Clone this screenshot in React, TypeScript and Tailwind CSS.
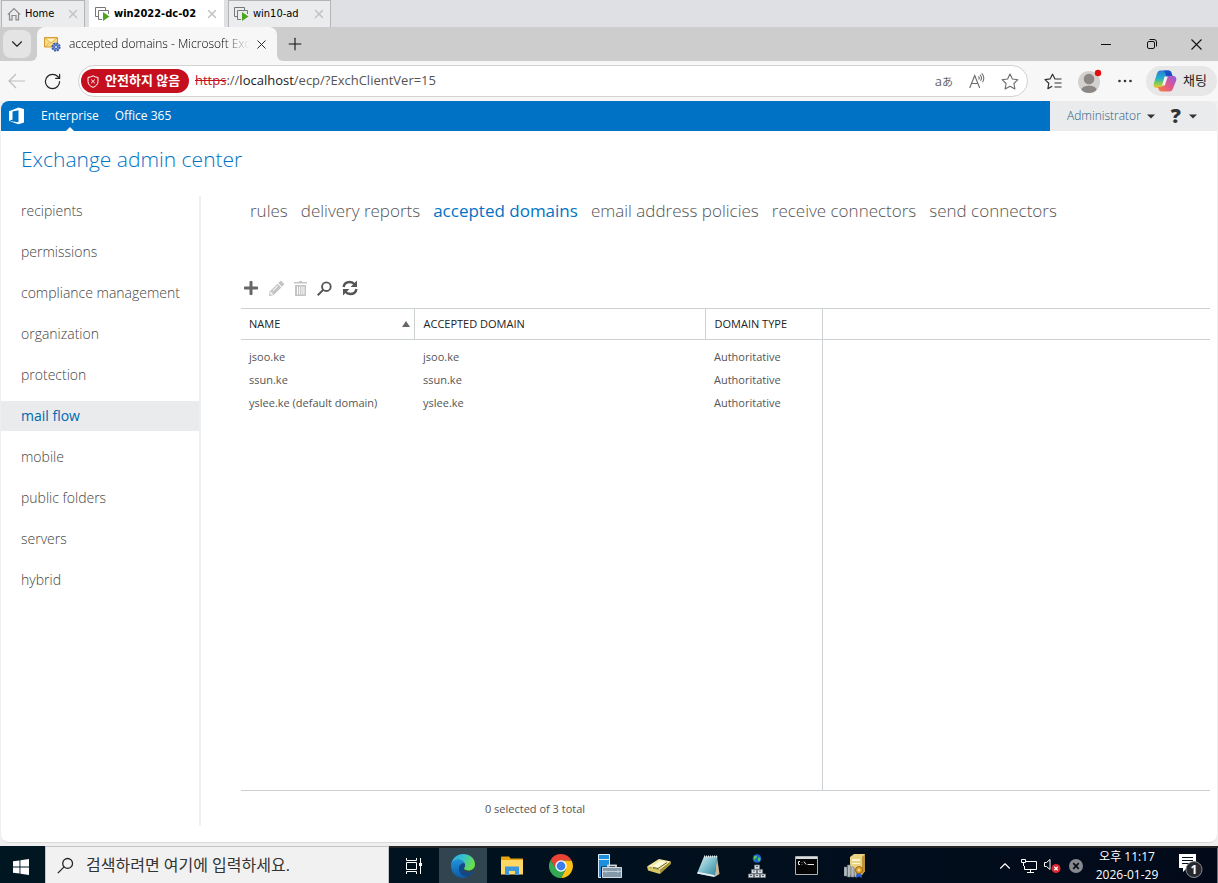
import { ReactNode } from "react";
import { ChevronDown, ChevronUp, Plus, RotateCw, X } from "lucide-react";
import { FaPlus, FaPencilAlt } from "react-icons/fa";

const NAV_ITEMS = [
  "recipients",
  "permissions",
  "compliance management",
  "organization",
  "protection",
  "mail flow",
  "mobile",
  "public folders",
  "servers",
  "hybrid",
];

const TABS = [
  "rules",
  "delivery reports",
  "accepted domains",
  "email address policies",
  "receive connectors",
  "send connectors",
];

const DOMAINS = [
  { name: "jsoo.ke", domain: "jsoo.ke", type: "Authoritative" },
  { name: "ssun.ke", domain: "ssun.ke", type: "Authoritative" },
  { name: "yslee.ke (default domain)", domain: "yslee.ke", type: "Authoritative" },
];

/* ---------- icons ---------- */

const HomeIcon = () => (
  <svg width="14" height="14" viewBox="0 0 14 14" fill="none" stroke="#8a8a8a" strokeWidth="1.2">
    <path d="M.8 7.6 7 1.5l6.2 6.1M2.5 6.5v6.3H5V8.5h4v4.3h2.500V6.500" />
  </svg>
);

const VmIcon = () => (
  <svg width="15" height="14" viewBox="0 0 15 14" fill="none">
    <path d="M3 9.500H.5V.5h10V3" stroke="#777" />
    <path d="M7 12.500H3.500v-9h10V7" stroke="#777" />
    <path d="m8 5 6.500 4.500L8 14z" fill="#4ba51d" />
  </svg>
);

const MailGearIcon = () => (
  <svg width="17" height="16" viewBox="0 0 17 16">
    <path d="M.5 1.500h13v9.500H.5z" fill="#f8dc85" stroke="#d39b2c" />
    <path d="m1 2 6 5 6-5z" fill="#fff1b8" stroke="#d9a744" strokeWidth=".8" />
    <path d="m1 11 4.500-4.500M13 11 8.500 6.500" stroke="#d9a744" strokeWidth=".8" />
    <circle cx="12" cy="11" r="3.600" fill="#7b9be0" stroke="#3a5ba8" strokeWidth="2" strokeDasharray="1.900 .9" />
    <circle cx="12" cy="11" r="1.500" fill="#eef3ff" stroke="#2f4f9d" strokeWidth=".8" />
  </svg>
);

const ShieldIcon = () => (
  <svg width="12" height="13" viewBox="0 0 12 13" fill="none" stroke="#fff">
    <path d="M6 .8c1.400 1 3 1.500 5 1.600v4c0 2.800-1.900 4.800-5 6-3.100-1.200-5-3.200-5-6v-4c2-.1 3.600-.6 5-1.600z" />
    <path d="m4.200 4.600 3.600 3.600m0-3.600L4.200 8.200" />
  </svg>
);

const StarIcon = () => (
  <svg width="18" height="17" viewBox="0 0 18 17" fill="none" stroke="#6b6b6b" strokeWidth="1.100" strokeLinejoin="round">
    <path d="m9 1 2.400 5 5.500.7-4 3.800 1 5.500L9 13.300 4.100 16l1-5.500-4-3.800L6.600 6z" />
  </svg>
);

const FavoritesIcon = () => (
  <svg width="18" height="17" viewBox="0 0 18 17" fill="none" stroke="#333" strokeWidth="1.200" strokeLinejoin="round">
    <path d="M12.200 6H11L8.500 1.200 6.200 5.800 1 6.600l3.800 3.700-.9 5.300 4.300-2.300M11 6h6.500M10.500 10h7M10.500 14h7" />
  </svg>
);

const ProfileIcon = () => (
  <svg width="24" height="24" viewBox="0 0 24 24">
    <defs>
      <clipPath id="avatar">
        <circle cx="11" cy="13" r="11" />
      </clipPath>
    </defs>
    <circle cx="11" cy="13" r="11" fill="#d3d1cf" />
    <g fill="#8a8785" clipPath="url(#avatar)">
      <circle cx="11" cy="10" r="5.300" />
      <ellipse cx="11" cy="22" rx="8" ry="5.500" />
    </g>
    <circle cx="20" cy="4" r="3.200" fill="#e60c0c" />
  </svg>
);

const CopilotIcon = () => (
  <svg width="24" height="22" viewBox="0 0 24 22">
    <defs>
      <linearGradient id="copA" x1="0" y1="0" x2="0" y2="1">
        <stop offset="0" stopColor="#2a7bd8" />
        <stop offset=".45" stopColor="#22b0c8" />
        <stop offset=".75" stopColor="#8ecb4f" />
        <stop offset="1" stopColor="#f6c92e" />
      </linearGradient>
      <linearGradient id="copB" x1="1" y1="0" x2="0" y2="1">
        <stop offset="0" stopColor="#8c5ce8" />
        <stop offset=".5" stopColor="#e0568e" />
        <stop offset="1" stopColor="#f7803a" />
      </linearGradient>
    </defs>
    <path d="M7.500.5h8c1.500 0 2.500 1 3 2.500l1 3h-3.200c-1.300 0-2.200.8-2.600 2L11 16c-.5 1.500-1.600 2-3 2H4c-2.500 0-4-1.800-3.200-4.500L4 3.500C4.600 1.500 5.800.5 7.500.5z" fill="url(#copA)" />
    <path d="M15.500.5c1.500 0 2.500 1 3 2.500l1 3h-3.200c-1.300 0-2.200.8-2.600 2L12.500 4C12 2 11.500.8 10 .5z" fill="#1b4fc4" />
    <path d="M16.500 21.500h-8c-1.500 0-2.500-1-3-2.500l-.5-2h3c1.300 0 2.200-.8 2.600-2L13 8c.5-1.500 1.600-2 3-2h4c2.500 0 4 1.800 3.200 4.500L20 18.500c-.6 2-1.800 3-3.500 3z" fill="url(#copB)" />
    <path d="m11.500 6.500 3.300 0-3 9-2.700 0z" fill="#f3f0f4" />
  </svg>
);

const OfficeIcon = () => (
  <svg width="17" height="18" viewBox="0 0 17 18">
    <path d="M0 4.200 9.500.5 15 2v13.500L9.500 17.300 0 14l9.500 1.200V3.200L3.500 4.600v8L0 14z" fill="#fff" />
  </svg>
);

const TrashIcon = () => (
  <svg width="13" height="15" viewBox="0 0 13 15" fill="#c4c4c4">
    <path d="M5 0h3v1h5v1.500H0V1h5zM1 4h11v10c0 .6-.4 1-1 1H2c-.6 0-1-.4-1-1zm2 1.500v8h1v-8zm2.200 0v8h1v-8zm2.200 0v8h1v-8zm2 0v8h1v-8z" fillRule="evenodd" />
  </svg>
);

const SearchIcon = ({ size, color, width }: { size: number; color: string; width: number }) => (
  <svg width={size} height={size} viewBox="0 0 16 16" fill="none" stroke={color} strokeWidth={width} className="shrink-0">
    <circle cx="10" cy="6" r="4.600" />
    <path d="M6.700 9.300.8 15.200" />
  </svg>
);

const RefreshIcon = () => (
  <svg width="16" height="16" viewBox="0 0 16 16" fill="none" stroke="#555" strokeWidth="2.400">
    <path d="M1.600 7C2 4 4.500 2 7.800 2c2 0 3.600.8 4.800 2.200M14.400 9c-.4 3-2.900 5-6.200 5-2 0-3.600-.8-4.800-2.200" />
    <path d="M15 .5V7H8.600zM1 15.500V9h6.400z" fill="#555" stroke="none" />
  </svg>
);

const WindowsIcon = () => (
  <svg width="16" height="16" viewBox="0 0 16 16" fill="#fff">
    <path d="M0 2.300 6.500 1.400v6.200H0zM7.400 1.200 16 0v7.600H7.400zM0 8.400h6.500v6.200L0 13.700zM7.400 8.400H16V16l-8.600-1.200z" />
  </svg>
);

const TaskViewIcon = () => (
  <svg width="17" height="16" viewBox="0 0 17 16" fill="none" stroke="#fff">
    <path d="M.5 0v2.500h10V0M.5 16v-2.500h10V16M.5 4.500h10v7H.5zM14.500 0v16" />
    <path d="M13 5h3v3h-3z" fill="#fff" stroke="none" />
  </svg>
);

const EdgeIcon = () => (
  <svg width="24" height="24" viewBox="0 0 24 24">
    <defs>
      <linearGradient id="edgeTop" x1="0" y1="0" x2="1" y2=".4">
        <stop offset="0" stopColor="#2aa6e0" />
        <stop offset=".5" stopColor="#35c1d0" />
        <stop offset="1" stopColor="#66de4c" />
      </linearGradient>
      <linearGradient id="edgeLeft" x1="0" y1="0" x2="0" y2="1">
        <stop offset="0" stopColor="#2192dc" />
        <stop offset="1" stopColor="#0c59a4" />
      </linearGradient>
    </defs>
    <path d="M0 11.500C.5 5 5.500 0 12 0c7 0 12 4.800 12 10.200 0 3.900-2.900 6.300-6.400 6.300-3 0-4.500-1.200-4.500-2 0-.7 1-1.300 1-3.200 0-3-3-5.500-6.800-5.500C3.800 5.800 1 8.500 0 11.500z" fill="url(#edgeTop)" />
    <path d="M0 12c0-3.500 3.400-6.200 7.300-6.200 3 0 5.700 1.500 6.500 4C11 8.800 8 11 8 14.500c0 4.500 3.600 8 8 8-1.200 1-2.600 1.500-4 1.500C5.200 24 0 18.600 0 12z" fill="url(#edgeLeft)" />
    <path d="M13 9.600C10.500 9.400 8 11.400 8 14.800c0 5 4.500 8.400 8.600 7.900 2.400-.8 4.400-2.400 5.700-4.400.4-.6-.1-.9-.6-.6-5 2.300-10.500.2-9.200-4.100.4-1 1.500-1.500 1.500-2.600 0-.7-.4-1.100-1-1.400z" fill="#114a8b" />
  </svg>
);

const FolderIcon = () => (
  <svg width="22" height="19" viewBox="0 0 22 19">
    <path d="M0 1.500C0 .8.500.5 1 .5h7l1.500 2H22V18H0z" fill="#e8a60c" />
    <path d="M0 4h22v14.500H0z" fill="#ffd765" />
    <path d="M4 19v-7.500c0-.6.4-1 1-1h12c.6 0 1 .4 1 1V19h-4v-4H8v4z" fill="#3a96dd" />
  </svg>
);

const ChromeIcon = () => (
  <svg width="24" height="24" viewBox="0 0 24 24">
    <path d="M12 6.400h10.600A12 12 0 0 0 1.600 6l5.300 9.200z" fill="#ea4335" />
    <path d="M16.900 14.800 12 24A12 12 0 0 0 22.600 6.400H12z" fill="#fbc116" />
    <path d="M7 14.800 1.600 6A12 12 0 0 0 12 24l5-9.200z" fill="#34a853" />
    <circle cx="12" cy="12" r="5.700" fill="#fff" />
    <circle cx="12" cy="12" r="4.400" fill="#3b7ded" />
  </svg>
);

const ServerManagerIcon = () => (
  <svg width="24" height="24" viewBox="0 0 24 24">
    <path d="M.5.500h11v23H.5z" fill="#1e8fdc" stroke="#d8ecfa" />
    <path d="M1 5.500h10" stroke="#d8ecfa" />
    <path d="M10 13v-1.500h8V13" fill="none" stroke="#d5dbe0" strokeWidth="1.500" />
    <path d="M3 12.500h21V24H3z" fill="#04141d" />
    <path d="M10 14v-2.500h8V14" fill="none" stroke="#d5dbe0" strokeWidth="1.500" />
    <path d="M4.500 13.500h19v10h-19z" fill="#8299aa" stroke="#d5dbe0" />
    <path d="M5 17.500h18M8 16v3M20 16v3" stroke="#c4ced5" />
  </svg>
);

const DriveIcon = () => (
  <svg width="24" height="16" viewBox="0 0 24 16">
    <path d="M0 8.500 12 1l12 2.500L13 12z" fill="#f3e9a6" />
    <path d="M0 8.500 13 12v4L1 12.500z" fill="#d9c866" />
    <path d="m13 12 11-8.500V6L13 16z" fill="#a8953a" />
    <path d="m6 8 8-5 5 1-8 5.500z" fill="#fffbe0" />
    <path d="m6 9.500 5 1 9-6" fill="none" stroke="#6e6322" />
  </svg>
);

const NotebookIcon = () => (
  <svg width="23" height="22" viewBox="0 0 23 22">
    <defs>
      <linearGradient id="note" x1="0" y1="0" x2="1" y2="1">
        <stop offset="0" stopColor="#e2f5f8" />
        <stop offset=".5" stopColor="#7bbccb" />
        <stop offset="1" stopColor="#23809b" />
      </linearGradient>
    </defs>
    <path d="m20 2 2.500 17-5 3z" fill="#c9b79a" />
    <path d="M7 1.500 20.500 1 17.500 22 0 18.500z" fill="url(#note)" />
    <path d="M7 1.500h13" stroke="#dfe9ea" strokeWidth="2" strokeDasharray="1 1" />
    <path d="m0 18.500 17.500 3.500.3-2L1 17z" fill="#e9eff0" />
  </svg>
);

const NetworkIcon = () => (
  <svg width="18" height="24" viewBox="0 0 18 24">
    <circle cx="9" cy="4.500" r="4.300" fill="#2065d4" />
    <path d="M6 2.500c1.500-1.500 3-.5 3 .5S7 4 7 5.500 5.500 5 6 2.500zM10 4c2-1 3 0 2 2.500s-2.500 0-2-2.500z" fill="#57cf4e" />
    <g fill="#d9dde1" stroke="#757b85" strokeWidth=".7">
      <path d="M6.500 11h5v4h-5zM3.500 15.500h5v4h-5zM9.500 15.500h5v4h-5zM.5 20h5v3.500h-5zM6.500 20h5v3.500h-5zM12.500 20h5v3.500h-5z" />
    </g>
    <path d="M8 12.500h2M5 17h2M11 17h2M2 21.500h2M8 21.500h2M14 21.500h2" stroke="#555c68" />
  </svg>
);

const TerminalIcon = () => (
  <svg width="23" height="19" viewBox="0 0 23 19">
    <path d="M.5.500h22v18H.5z" fill="#050505" stroke="#aeb2b5" />
    <path d="M1 1h21v2H1z" fill="#d9dcde" />
    <path d="M5 5.500H3.500v3H5M7 6v.5M7 8v.5M9 5.500l2 3M12.500 8.500H19" fill="none" stroke="#e6e6e6" />
  </svg>
);

const CertServerIcon = () => (
  <svg width="23" height="24" viewBox="0 0 23 24">
    <path d="m6 3 4-3h11v17l-3 4H6z" fill="#ecd383" />
    <path d="m18 3 3-3v17l-3 4z" fill="#b9943a" />
    <path d="M8 5h8v2H8zM8 9h8v1H8z" fill="#fff5cc" />
    <path d="M0 13h3v9H0zM3.500 11h3v12h-3zM7 13h3v10H7zM10.500 15h2v8h-2z" fill="#b4babf" stroke="#6f767c" strokeWidth=".5" />
    <path d="m13 18-1 6 3-1.500 3 1.500-1-6z" fill="#2b5fd3" />
    <circle cx="15" cy="16" r="3.500" fill="#e7a52a" stroke="#9a6510" />
    <circle cx="15" cy="16" r="1.200" fill="#fbe3a0" />
  </svg>
);

const MonitorIcon = () => (
  <svg width="16" height="14" viewBox="0 0 16 14" fill="none" stroke="#fff">
    <path d="M5 2.500h10.500v8H3.500V7M9.500 10.500v3M6 13.500h7" />
    <path d="M.5.500h4v3h-4zM2.500 3.500V7" />
  </svg>
);

const SpeakerIcon = () => (
  <svg width="17" height="15" viewBox="0 0 17 15" fill="none" stroke="#fff">
    <path d="M.5 4.500h2L6 1.500v10l-3.500-3h-2z" />
    <circle cx="12" cy="10.500" r="4.500" fill="#e0242e" stroke="none" />
    <path d="m10.300 8.800 3.400 3.400m0-3.400-3.400 3.400" strokeWidth="1.300" />
  </svg>
);

const BlockedIcon = () => (
  <svg width="14" height="14" viewBox="0 0 14 14">
    <circle cx="7" cy="7" r="7" fill="#868a8f" />
    <path d="m4.200 4.200 5.600 5.600m0-5.600L4.200 9.800" stroke="#0c121d" strokeWidth="1.800" />
  </svg>
);

/* ---------- virtual machine tabs ---------- */

type VmTabProps = { icon: ReactNode; label: string; active?: boolean; className: string };

const VmTab = ({ icon, label, active, className }: VmTabProps) => (
  <div
    className={`flex items-center gap-1 border border-b-0 pr-1 pl-[5px] text-[11px] text-black ${
      active ? "border-white bg-white font-bold" : "border-[#b4b4b6] bg-[#ebecee]"
    } ${className}`}
  >
    {icon}
    <button className="whitespace-nowrap">{label}</button>
    <button aria-label={`Close ${label}`} className="ml-auto">
      <X size={14} color="#c2c2c2" strokeWidth={2.500} />
    </button>
  </div>
);

const VmTabs = () => (
  <div className="flex h-[27px] bg-[#dfe0e3] pl-px font-['DejaVu_Sans_Condensed','DejaVu_Sans',sans-serif]">
    <VmTab icon={<HomeIcon />} label="Home" className="w-21" />
    <VmTab icon={<VmIcon />} label="win2022-dc-02" active className="ml-1 w-[135px]" />
    <VmTab icon={<VmIcon />} label="win10-ad" className="ml-1 w-[103px]" />
  </div>
);

/* ---------- browser ---------- */

const BrowserTabs = () => (
  <div className="flex h-[34px] items-center bg-[#cdcdcd]">
    <button aria-label="Tab actions" className="ml-[3px] flex size-7 items-center justify-center rounded-lg bg-[#e4e4e4]">
      <ChevronDown size={18} color="#222" strokeWidth={1.500} />
    </button>
    <span className="size-1.5 self-end bg-[#f7f7f7]">
      <span className="block size-1.5 rounded-br-md bg-[#cdcdcd]" />
    </span>
    <div className="flex h-full w-60 items-center rounded-t-lg bg-[#f7f7f7] pr-2 pl-[7px]">
      <MailGearIcon />
      <button className="ml-2 mask-r-from-85% text-left text-xs font-light whitespace-nowrap text-black">
        accepted domains - Microsoft Exc
      </button>
      <button aria-label="Close tab" className="ml-auto">
        <X size={15} color="#222" strokeWidth={1.500} />
      </button>
    </div>
    <span className="size-1.5 self-end bg-[#f7f7f7]">
      <span className="block size-1.5 rounded-bl-md bg-[#cdcdcd]" />
    </span>
    <button aria-label="New tab" className="ml-0.5">
      <Plus size={20} color="#111" strokeWidth={1.300} />
    </button>
    <div className="ml-auto flex items-center">
      <button aria-label="Minimize" className="flex h-8 w-[46px] items-center justify-center">
        <svg width="10" height="10" viewBox="0 0 10 10" stroke="#111">
          <path d="M0 5.500h10" />
        </svg>
      </button>
      <button aria-label="Restore" className="flex h-8 w-[46px] items-center justify-center">
        <svg width="10" height="10" viewBox="0 0 10 10" fill="none" stroke="#111">
          <rect x=".5" y="2.500" width="7" height="7" rx="1.500" />
          <path d="M2.500.500H7A2.500 2.500 0 0 1 9.500 3v4.500" />
        </svg>
      </button>
      <button aria-label="Close" className="flex h-8 w-[43px] items-center justify-center">
        <svg width="11" height="11" viewBox="0 0 11 11" stroke="#111" strokeWidth="1.100">
          <path d="m.5.500 10 10m0-10-10 10" />
        </svg>
      </button>
    </div>
  </div>
);

const AddressBar = () => (
  <div className="flex h-10 items-center bg-[#f7f7f7] pl-2">
    <button aria-label="Back">
      <svg width="18" height="16" viewBox="0 0 18 16" fill="none" stroke="#bdbdbd" strokeWidth="1.200">
        <path d="M17 8H1.500M8 1 1 8l7 7" />
      </svg>
    </button>
    <button aria-label="Refresh" className="ml-[17px]">
      <RotateCw size={19} color="#222" strokeWidth={1.500} />
    </button>
    <div className="ml-4 flex h-8 flex-1 items-center rounded-full border border-[#d2d2d2] bg-white pr-2 pl-0.5">
      <button className="flex h-6 w-27 items-center gap-1.5 rounded-full bg-[#c50f1f] pl-1.5 text-[13px] font-bold whitespace-nowrap text-white">
        <ShieldIcon />
        안전하지 않음
      </button>
      <span role="textbox" aria-label="Address" className="ml-1.5 text-[13px] text-[#555]">
        <s className="text-[#c50f1f]">https</s>://<span className="text-[#1a1a1a]">localhost</span>/ecp/?ExchClientVer=15
      </span>
      <div className="ml-auto flex items-center gap-4 text-[#666]">
        <button aria-label="Translate" className="text-[13px] leading-4">
          a<span className="text-[11px]">あ</span>
        </button>
        <button aria-label="Read aloud">
          <svg width="16" height="16" viewBox="0 0 16 16" fill="none" stroke="#6b6b6b" strokeWidth="1.100">
            <path d="M.7 15 5.700 2.500l5 12.500M2.500 10.500h6.400M9.500 3.500c.8.8.8 2 .2 3M11 1.800c1.700 1.600 1.700 4.200.5 6M12.700.4c2.600 2.400 2.600 6.200.8 8.800" />
          </svg>
        </button>
        <button aria-label="Add to favorites">
          <StarIcon />
        </button>
      </div>
    </div>
    <button aria-label="Favorites" className="ml-4">
      <FavoritesIcon />
    </button>
    <button aria-label="Profile" className="ml-4">
      <ProfileIcon />
    </button>
    <button aria-label="More" className="ml-4">
      <svg width="14" height="4" viewBox="0 0 14 4" fill="#333">
        <circle cx="1.500" cy="2" r="1.300" />
        <circle cx="7" cy="2" r="1.300" />
        <circle cx="12.500" cy="2" r="1.300" />
      </svg>
    </button>
    <button className="mr-px ml-3.5 flex h-[30px] w-[71px] items-center gap-1.5 rounded-full bg-[#e7e7e7] pl-[7px] text-[13px] whitespace-nowrap text-[#222]">
      <CopilotIcon />
      채팅
    </button>
  </div>
);

/* ---------- Exchange admin center ---------- */

const Caret = () => (
  <svg width="8" height="5" viewBox="0 0 8 5" fill="#333">
    <path d="M0 .5h8L4 4.500z" />
  </svg>
);

const SuiteBar = () => (
  <header className="flex h-[30px] rounded-t-lg bg-[#e9ebed]">
    <div className="flex flex-1 items-center rounded-tl-lg bg-[#0072c6] pl-2 text-xs text-white">
      <OfficeIcon />
      <a href="#" className="relative ml-[15px] leading-[30px]">
        Enterprise
        <svg className="absolute bottom-0 left-1/2 -ml-1" width="8" height="4" viewBox="0 0 8 4" fill="#fff">
          <path d="M0 4 4 0l4 4z" />
        </svg>
      </a>
      <a href="#" className="ml-4 leading-[30px]">Office 365</a>
    </div>
    <div className="flex w-[167px] items-center pl-[17px]">
      <button className="flex items-center gap-1.5 text-xs font-light text-[#2b5a7c]">
        Administrator <Caret />
      </button>
      <button aria-label="Help" className="ml-4 flex items-center gap-2 text-xl leading-5 font-extrabold text-[#333]">
        ? <Caret />
      </button>
    </div>
  </header>
);

const Sidebar = () => (
  <nav className="w-[200px] shrink-0 border-r-2 border-[#efefef]">
    <ul className="flex flex-col gap-[11px]">
      {NAV_ITEMS.map((item) => (
        <li key={item}>
          <a
            href="#"
            className={`block pl-5 text-sm leading-[30px] ${
              item === "mail flow" ? "bg-[#e9ebed] text-[#0067b0]" : "font-light text-[#444]"
            }`}
          >
            {item}
          </a>
        </li>
      ))}
    </ul>
  </nav>
);

const Toolbar = () => (
  <div className="mt-[54px] flex h-4 items-center gap-2.5 pl-0.5">
    <button aria-label="New"><FaPlus size={16} color="#666" /></button>
    <button aria-label="Edit" disabled><FaPencilAlt size={15} color="#c4c4c4" /></button>
    <button aria-label="Delete" disabled><TrashIcon /></button>
    <button aria-label="Search"><SearchIcon size={15} color="#555" width={2} /></button>
    <button aria-label="Refresh list"><RefreshIcon /></button>
  </div>
);

const DomainTable = () => (
  <table className="mt-3 w-full table-fixed text-left text-[11px]">
    <colgroup>
      <col className="w-[173px]" />
      <col className="w-[291px]" />
      <col className="w-[117px]" />
      <col />
    </colgroup>
    <thead>
      <tr className="h-[31px] border-y border-[#ccd1d4] text-[#222]">
        <th className="border-r border-[#ccd1d4] pr-1 pl-2 font-normal">
          <button className="flex w-full items-center justify-between">
            NAME
            <svg width="8" height="6" viewBox="0 0 8 6" fill="#666">
              <path d="M4 0l4 6H0z" />
            </svg>
          </button>
        </th>
        <th className="border-r border-[#ccd1d4] pl-[9px] font-normal">ACCEPTED DOMAIN</th>
        <th className="border-r border-[#ccd1d4] pl-[9px] font-normal">DOMAIN TYPE</th>
        <td />
      </tr>
    </thead>
    <tbody className="text-[#555]">
      {DOMAINS.map((row, i) => (
        <tr key={row.name} className={`align-bottom leading-[23px] ${i === 0 ? "h-7" : "h-[23px]"}`}>
          <td className="pl-2">{row.name}</td>
          <td className="pl-[9px]">{row.domain}</td>
          <td className="pl-[9px]">{row.type}</td>
          <td className="border-l border-[#ccd1d4]" />
        </tr>
      ))}
    </tbody>
  </table>
);

const AdminCenter = () => (
  <div className="mx-px flex flex-1 flex-col rounded-lg border-b border-[#d9d9d9] bg-white">
    <SuiteBar />
    <h1 className="mt-3 pl-5 text-[21px] leading-8 font-light text-[#0072c6]">Exchange admin center</h1>
    <div className="mt-[21px] mb-4 flex flex-1">
      <Sidebar />
      <main className="ml-10 flex flex-1 flex-col pr-[7px]">
        <div className="flex gap-[13px] pl-[9px] text-[17px] leading-[30px] whitespace-nowrap">
          {TABS.map((tab) => (
            <a
              key={tab}
              href="#"
              className={tab === "accepted domains" ? "text-[#0072c6]" : "font-light text-[#555]"}
            >
              {tab}
            </a>
          ))}
        </div>
        <Toolbar />
        <DomainTable />
        <div className="flex flex-1 border-b border-[#ccd1d4]">
          <div className="w-[582px] border-r border-[#ccd1d4]" />
        </div>
        <p className="w-[588px] pt-[9px] pb-2 text-center text-[11px] leading-[18px] text-[#555]">
          0 selected of 3 total
        </p>
      </main>
    </div>
  </div>
);

/* ---------- taskbar ---------- */

const TASKS = [
  { label: "Task View", icon: <TaskViewIcon /> },
  { label: "Microsoft Edge", icon: <EdgeIcon />, active: true },
  { label: "File Explorer", icon: <FolderIcon /> },
  { label: "Google Chrome", icon: <ChromeIcon /> },
  { label: "Server Manager", icon: <ServerManagerIcon /> },
  { label: "Storage", icon: <DriveIcon /> },
  { label: "Notepad", icon: <NotebookIcon /> },
  { label: "DNS", icon: <NetworkIcon /> },
  { label: "Command Prompt", icon: <TerminalIcon /> },
  { label: "Certification Authority", icon: <CertServerIcon /> },
];

const Taskbar = () => (
  <footer className="mt-[3px] flex h-[37px] items-stretch bg-linear-to-r from-[#001722] to-[#020a1a] text-white">
    <button aria-label="Start" className="flex w-[45px] items-center justify-center pt-1 pr-1">
      <WindowsIcon />
    </button>
    <label className="flex w-[344px] items-center gap-3 border border-b-0 border-[#c4c4c4] bg-[#f1f1f1] pl-[11px]">
      <SearchIcon size={17} color="#222" width={1.200} />
      <input
        type="search"
        aria-label="Search"
        placeholder="검색하려면 여기에 입력하세요."
        className="w-full bg-transparent text-base placeholder:text-[#333]"
      />
    </label>
    <div className="flex gap-px border-t-2 border-[#262626] pl-px">
      {TASKS.map((task) => (
        <button
          key={task.label}
          aria-label={task.label}
          className={`flex w-12 items-center justify-center ${task.active ? "bg-[#314550]" : ""}`}
        >
          {task.icon}
        </button>
      ))}
    </div>
    <div className="flex flex-1 items-center justify-end border-t-2 border-[#262626]">
      <button aria-label="Show hidden icons"><ChevronUp size={18} strokeWidth={1.500} /></button>
      <button aria-label="Network" className="ml-[7px]"><MonitorIcon /></button>
      <button aria-label="Volume" className="ml-[7px]"><SpeakerIcon /></button>
      <button aria-label="Blocked" className="ml-2"><BlockedIcon /></button>
      <div className="ml-2 w-[72px] text-center text-xs leading-[18px] whitespace-nowrap">
        <div>오후 11:17</div>
        <div>2026-01-29</div>
      </div>
      <button aria-label="Notifications" className="relative mr-3.5 ml-4">
        <svg width="24" height="24" viewBox="0 0 24 24">
          <path d="M0 0h17v14H8l-4 4v-4H0z" fill="#fff" />
          <path d="M3 3.500h11M3 6.500h11M3 9.500h7" stroke="#07101f" />
          <circle cx="15" cy="15.500" r="8" fill="#26282d" stroke="#8b8d90" />
        </svg>
        <span className="absolute top-2 left-[11px] w-2 text-xs leading-4 font-bold">1</span>
      </button>
      <span className="h-full w-px bg-[#6a7078]" />
    </div>
  </footer>
);

const App = () => {
  return (
    <div className="flex min-h-screen flex-col bg-[#efefef] font-['Open_Sans','Noto_Sans_CJK_KR',sans-serif]">
      <VmTabs />
      <BrowserTabs />
      <AddressBar />
      <AdminCenter />
      <Taskbar />
    </div>
  );
};

export default App;
